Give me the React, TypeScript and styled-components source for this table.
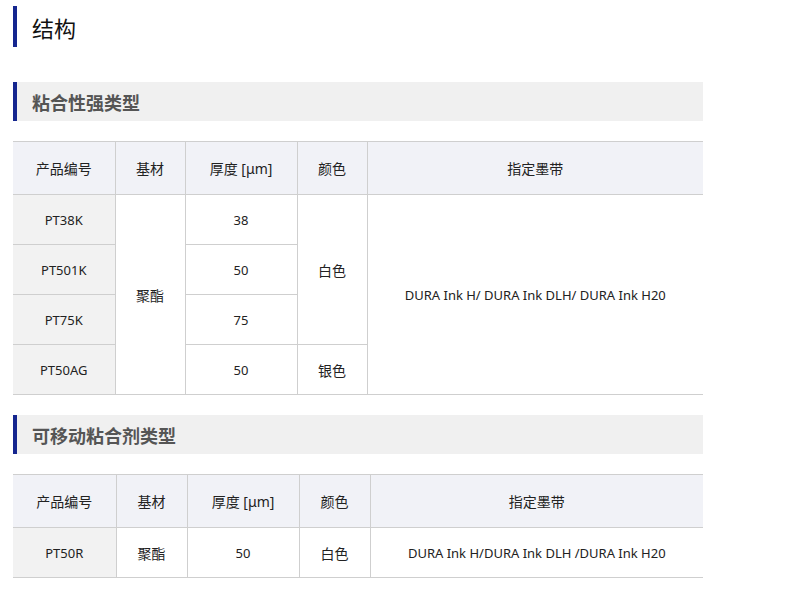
import styled, { createGlobalStyle } from "styled-components"

const GlobalStyle = createGlobalStyle`
    body {
        margin: 0;
        background: #fff;
        font-family: "Noto Sans", "Noto Sans CJK SC", sans-serif;
        color: #222;
    }
`

type Span = { text: string; span: number }

type Row = {
    code: string
    base?: Span
    thick: string
    color?: Span
    ink?: Span
}

const strongRows: Row[] = [
    { code: "PT38K", base: { text: "聚酯", span: 4 }, thick: "38", color: { text: "白色", span: 3 }, ink: { text: "DURA Ink H/ DURA Ink DLH/ DURA Ink H20", span: 4 } },
    { code: "PT501K", thick: "50" },
    { code: "PT75K", thick: "75" },
    { code: "PT50AG", thick: "50", color: { text: "银色", span: 1 } },
]

const removableRows: Row[] = [
    { code: "PT50R", base: { text: "聚酯", span: 1 }, thick: "50", color: { text: "白色", span: 1 }, ink: { text: "DURA Ink H/DURA Ink DLH /DURA Ink H20", span: 1 } },
]

function SpecTable({ rows, widths }: { rows: Row[]; widths: number[] }) {
    return (
        <Table>
            <colgroup>
                {widths.map((w, i) => <col key={i} style={{ width: w }} />)}
            </colgroup>
            <thead>
                <tr>
                    <HeadCell>产品编号</HeadCell>
                    <HeadCell>基材</HeadCell>
                    <HeadCell>厚度 [μm]</HeadCell>
                    <HeadCell>颜色</HeadCell>
                    <HeadCell>指定墨带</HeadCell>
                </tr>
            </thead>
            <tbody>
                {rows.map(r => (
                    <tr key={r.code}>
                        <Cell $code>{r.code}</Cell>
                        {r.base && <Cell $cjk rowSpan={r.base.span}>{r.base.text}</Cell>}
                        <Cell>{r.thick}</Cell>
                        {r.color && <Cell $cjk rowSpan={r.color.span}>{r.color.text}</Cell>}
                        {r.ink && <Cell rowSpan={r.ink.span}>{r.ink.text}</Cell>}
                    </tr>
                ))}
            </tbody>
        </Table>
    )
}

export default function App() {
    return (
        <>
            <GlobalStyle />
            <Page>
                <Title>结构</Title>
                <Heading>粘合性强类型</Heading>
                <SpecTable rows={strongRows} widths={[102, 70, 112, 70, 336]} />
                <Heading>可移动粘合剂类型</Heading>
                <SpecTable rows={removableRows} widths={[103, 71, 112, 71, 333]} />
            </Page>
        </>
    )
}

const Page = styled.div`
    width: 690px;
    padding: 6px 0 0 13px;
    display: flex;
    flex-direction: column;
`

const Title = styled.h1`
    margin: 0 0 35px;
    height: 41px;
    border-left: 4px solid #15268f;
    padding-left: 15px;
    display: flex;
    align-items: center;
    font-size: 22px;
    font-weight: 400;
    color: #111;
    font-family: "Noto Sans CJK SC", sans-serif;
`

const Heading = styled.h2`
    margin: 0 0 20px;
    height: 39px;
    background: #f0f0f0;
    border-left: 4px solid #15268f;
    padding-left: 15px;
    display: flex;
    align-items: center;
    font-size: 18px;
    font-weight: 700;
    color: #555;
    font-family: "Noto Sans CJK SC", sans-serif;
`

const Table = styled.table`
    width: 690px;
    table-layout: fixed;
    border-collapse: collapse;
    margin-bottom: 20px;
    font-size: 13px;
    border-top: 1px solid #cfcfcf;
    border-bottom: 1px solid #cfcfcf;
`

const HeadCell = styled.th`
    height: 52px;
    padding: 0;
    background: #f1f2f7;
    font-size: 14px;
    font-weight: 400;
    color: #222;
    text-align: center;
    border: 1px solid #cfcfcf;
    border-top: none;
    &:first-child { border-left: none; }
    &:last-child { border-right: none; }
`

const Cell = styled.td<{ $code?: boolean; $cjk?: boolean }>`
    height: 49px;
    padding: 0;
    text-align: center;
    color: #222;
    font-size: ${p => (p.$cjk ? "14px" : "13px")};
    background: ${p => (p.$code ? "#f2f2f2" : "#fff")};
    border: 1px solid #cfcfcf;
    border-left: ${p => (p.$code ? "none" : "1px solid #cfcfcf")};
    &:last-child { border-right: none; }
`
